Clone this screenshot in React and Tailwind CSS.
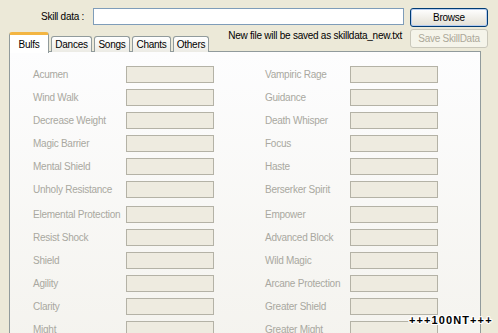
import React from 'react';

const leftSkills = [
  'Acumen',
  'Wind Walk',
  'Decrease Weight',
  'Magic Barrier',
  'Mental Shield',
  'Unholy Resistance',
  'Elemental Protection',
  'Resist Shock',
  'Shield',
  'Agility',
  'Clarity',
  'Might',
];

const rightSkills = [
  'Vampiric Rage',
  'Guidance',
  'Death Whisper',
  'Focus',
  'Haste',
  'Berserker Spirit',
  'Empower',
  'Advanced Block',
  'Wild Magic',
  'Arcane Protection',
  'Greater Shield',
  'Greater Might',
];

const tabs = [
  { name: 'Bulfs', w: 'w-[40px]' },
  { name: 'Dances', w: 'w-[41px]' },
  { name: 'Songs', w: 'w-[36px]' },
  { name: 'Chants', w: 'w-[39px]' },
  { name: 'Others', w: 'w-[36px]' },
];

function SkillField({ label, labelWidth }) {
  return (
    <div className="flex items-center">
      <div className={`${labelWidth} text-[#a9a8a0] whitespace-nowrap`}>{label}</div>
      <div className="w-[88px] h-[17px] border border-[#b4b2a6] bg-[#eeebe0]" />
    </div>
  );
}

export default function App() {
  return (
    <div className="relative w-[498px] h-[333px] overflow-hidden bg-[#ece9d8] font-['Liberation_Sans',Arial,sans-serif] text-[10px] tracking-[-0.25px] text-black">
      {/* file row */}
      <div className="flex items-start pt-[8px] h-[27px]">
        <div className="pl-[41px] w-[93px] h-[17px] flex items-center">Skill data :</div>
        <div className="w-[311px] h-[17px] border border-[#7f9db9] bg-white" />
        <button className="ml-[6px] w-[78px] h-[19px] rounded-[3px] border border-[#003c74] bg-gradient-to-b from-white to-[#e3e0d5] shadow-[inset_0_0_0_1px_#b7cdf0] flex items-center justify-center">
          Browse
        </button>
      </div>

      {/* tabs + save row */}
      <div className="flex h-[25px]">
        <div className="pl-[9px] flex items-end gap-[2px]">
          {tabs.map((t, i) =>
            i === 0 ? (
              <div
                key={t.name}
                className={`relative z-10 ${t.w} h-[21px] -mb-px bg-white border border-b-0 border-[#919b9c] rounded-t-[3px] border-t-[3px] border-t-[#f3b542] flex justify-center pt-[2px]`}
              >
                {t.name}
              </div>
            ) : (
              <div
                key={t.name}
                className={`${t.w} h-[16px] bg-gradient-to-b from-white to-[#ecebe5] border border-b-0 border-[#919b9c] rounded-t-[3px] flex justify-center items-center`}
              >
                {t.name}
              </div>
            )
          )}
        </div>
        <div className="flex-1 flex justify-end pt-[1px] pr-[8px] whitespace-nowrap">
          New file will be saved as skilldata_new.txt
        </div>
        <button className="mt-[2px] mr-[10px] w-[78px] h-[19px] rounded-[3px] border border-[#c9c7ba] bg-[#f5f4ea] text-[#aca899] flex items-center justify-center">
          Save SkillData
        </button>
      </div>

      {/* tab panel */}
      <div className="ml-[9px] -mt-px w-[472px] h-[300px] border border-[#919b9c] bg-gradient-to-b from-[#fdfdfe] to-[#f4f3ee] pt-[14px] pl-[23px]">
        <div className="flex">
          <div className="flex flex-col gap-[6px]">
            {leftSkills.map((s, i) => (
              <div key={s} className={i === 6 ? 'mt-[2px]' : ''}>
                <SkillField label={s} labelWidth="w-[93px]" />
              </div>
            ))}
          </div>
          <div className="ml-[51px] flex flex-col gap-[6px]">
            {rightSkills.map((s, i) => (
              <div key={s} className={i === 6 ? 'mt-[2px]' : ''}>
                <SkillField label={s} labelWidth="w-[85px]" />
              </div>
            ))}
          </div>
        </div>
      </div>

      {/* watermark */}
      <div className="absolute left-[409px] top-[315px] leading-none font-['Liberation_Sans',Arial,sans-serif] font-bold text-[11px] tracking-[1.1px] text-black [text-shadow:1px_0_0_#fff,-1px_0_0_#fff,0_1px_0_#fff,0_-1px_0_#fff,1px_1px_0_#fff,-1px_-1px_0_#fff,1px_-1px_0_#fff,-1px_1px_0_#fff]">
        +++100NT+++
      </div>
    </div>
  );
}
